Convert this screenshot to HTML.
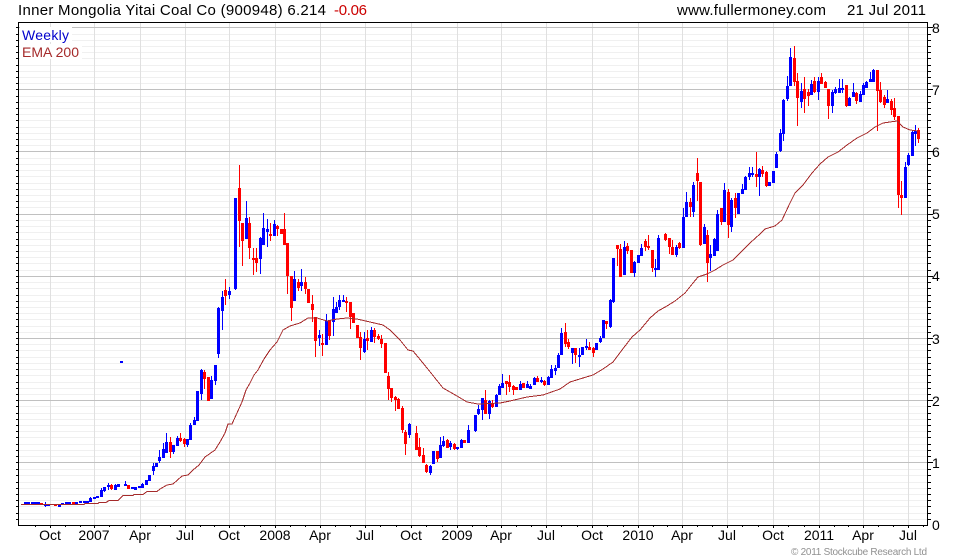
<!DOCTYPE html>
<html><head><meta charset="utf-8"><title>Inner Mongolia Yitai Coal Co</title>
<style>html,body{margin:0;padding:0;background:#fff;width:980px;height:560px;overflow:hidden}svg{display:block}text{font-family:"Liberation Sans",Arial,sans-serif}</style></head>
<body>
<svg width="980" height="560" viewBox="0 0 980 560" xmlns="http://www.w3.org/2000/svg">
<g shape-rendering="crispEdges" fill="none">
<path stroke="#f0f0f0" d="M19 519.5H927M19 513.5H927M19 506.5H927M19 500.5H927M19 494.5H927M19 488.5H927M19 482.5H927M19 475.5H927M19 469.5H927M19 456.5H927M19 450.5H927M19 444.5H927M19 437.5H927M19 431.5H927M19 425.5H927M19 419.5H927M19 413.5H927M19 406.5H927M19 394.5H927M19 388.5H927M19 382.5H927M19 375.5H927M19 369.5H927M19 363.5H927M19 357.5H927M19 350.5H927M19 344.5H927M19 332.5H927M19 326.5H927M19 319.5H927M19 313.5H927M19 307.5H927M19 301.5H927M19 295.5H927M19 288.5H927M19 282.5H927M19 270.5H927M19 263.5H927M19 257.5H927M19 251.5H927M19 245.5H927M19 239.5H927M19 232.5H927M19 226.5H927M19 220.5H927M19 207.5H927M19 201.5H927M19 195.5H927M19 189.5H927M19 183.5H927M19 176.5H927M19 170.5H927M19 164.5H927M19 158.5H927M19 145.5H927M19 139.5H927M19 133.5H927M19 127.5H927M19 120.5H927M19 114.5H927M19 108.5H927M19 102.5H927M19 96.5H927M19 83.5H927M19 77.5H927M19 71.5H927M19 65.5H927M19 58.5H927M19 52.5H927M19 46.5H927M19 40.5H927M19 34.5H927"/>
<path stroke="#e0e0e0" d="M50.5 23V525M94.5 23V525M140.5 23V525M185.5 23V525M229.5 23V525M275.5 23V525M320.5 23V525M365.5 23V525M411.5 23V525M457.5 23V525M501.5 23V525M546.5 23V525M592.5 23V525M638.5 23V525M682.5 23V525M727.5 23V525M773.5 23V525M819.5 23V525M863.5 23V525M908.5 23V525"/>
<path stroke="#c0c0c0" d="M19 27.5H927M19 89.5H927M19 151.5H927M19 214.5H927M19 276.5H927M19 338.5H927M19 400.5H927M19 462.5H927"/>
<rect x="20" y="27" width="52" height="15" fill="#fff"/>
<rect x="20" y="44" width="62" height="15" fill="#fff"/>
<path stroke="#000" d="M18.5 22V526M18 22.5H928M927.5 22V526M18 525.5H928"/>
<path stroke="#000" d="M16 519.5H18M16 513.5H18M16 506.5H18M16 500.5H18M16 494.5H18M16 488.5H18M16 482.5H18M16 475.5H18M16 469.5H18M16 462.5H18M16 456.5H18M16 450.5H18M16 444.5H18M16 437.5H18M16 431.5H18M16 425.5H18M16 419.5H18M16 413.5H18M16 406.5H18M16 400.5H18M16 394.5H18M16 388.5H18M16 382.5H18M16 375.5H18M16 369.5H18M16 363.5H18M16 357.5H18M16 350.5H18M16 344.5H18M16 338.5H18M16 332.5H18M16 326.5H18M16 319.5H18M16 313.5H18M16 307.5H18M16 301.5H18M16 295.5H18M16 288.5H18M16 282.5H18M16 276.5H18M16 270.5H18M16 263.5H18M16 257.5H18M16 251.5H18M16 245.5H18M16 239.5H18M16 232.5H18M16 226.5H18M16 220.5H18M16 214.5H18M16 207.5H18M16 201.5H18M16 195.5H18M16 189.5H18M16 183.5H18M16 176.5H18M16 170.5H18M16 164.5H18M16 158.5H18M16 151.5H18M16 145.5H18M16 139.5H18M16 133.5H18M16 127.5H18M16 120.5H18M16 114.5H18M16 108.5H18M16 102.5H18M16 96.5H18M16 89.5H18M16 83.5H18M16 77.5H18M16 71.5H18M16 65.5H18M16 58.5H18M16 52.5H18M16 46.5H18M16 40.5H18M16 34.5H18M16 27.5H18"/>
<path stroke="#000" d="M928 519.5H931M928 513.5H931M928 506.5H931M928 500.5H931M928 494.5H931M928 488.5H931M928 482.5H931M928 475.5H931M928 469.5H931M928 462.5H933M928 456.5H931M928 450.5H931M928 444.5H931M928 437.5H931M928 431.5H931M928 425.5H931M928 419.5H931M928 413.5H931M928 406.5H931M928 400.5H933M928 394.5H931M928 388.5H931M928 382.5H931M928 375.5H931M928 369.5H931M928 363.5H931M928 357.5H931M928 350.5H931M928 344.5H931M928 338.5H933M928 332.5H931M928 326.5H931M928 319.5H931M928 313.5H931M928 307.5H931M928 301.5H931M928 295.5H931M928 288.5H931M928 282.5H931M928 276.5H933M928 270.5H931M928 263.5H931M928 257.5H931M928 251.5H931M928 245.5H931M928 239.5H931M928 232.5H931M928 226.5H931M928 220.5H931M928 214.5H933M928 207.5H931M928 201.5H931M928 195.5H931M928 189.5H931M928 183.5H931M928 176.5H931M928 170.5H931M928 164.5H931M928 158.5H931M928 151.5H933M928 145.5H931M928 139.5H931M928 133.5H931M928 127.5H931M928 120.5H931M928 114.5H931M928 108.5H931M928 102.5H931M928 96.5H931M928 89.5H933M928 83.5H931M928 77.5H931M928 71.5H931M928 65.5H931M928 58.5H931M928 52.5H931M928 46.5H931M928 40.5H931M928 34.5H931M928 27.5H933"/>
<path stroke="#000" d="M50.5 526V528M94.5 526V528M140.5 526V528M185.5 526V528M229.5 526V528M275.5 526V528M320.5 526V528M365.5 526V528M411.5 526V528M457.5 526V528M501.5 526V528M546.5 526V528M592.5 526V528M638.5 526V528M682.5 526V528M727.5 526V528M773.5 526V528M819.5 526V528M863.5 526V528M908.5 526V528M35.5 526V527M65.5 526V527M80.5 526V527M109.5 526V527M125.5 526V527M155.5 526V527M170.5 526V527M200.5 526V527M214.5 526V527M244.5 526V527M260.5 526V527M290.5 526V527M305.5 526V527M335.5 526V527M350.5 526V527M380.5 526V527M396.5 526V527M426.5 526V527M442.5 526V527M472.5 526V527M486.5 526V527M516.5 526V527M531.5 526V527M561.5 526V527M577.5 526V527M607.5 526V527M623.5 526V527M653.5 526V527M667.5 526V527M697.5 526V527M712.5 526V527M742.5 526V527M758.5 526V527M788.5 526V527M804.5 526V527M834.5 526V527M848.5 526V527M878.5 526V527M893.5 526V527M923.5 526V527"/>

<!-- blue wicks -->
<path stroke="#0000ff" stroke-width="1" d="M45.5 502V507M90.5 497V502M101.5 488V497M104.5 487V492M108.5 483V490M115.5 484V490M125.5 481V486M142.5 483V488M153.5 463V475M159.5 450V463M163.5 443V458M166.5 433V453M173.5 445V454M177.5 436V446M187.5 439V447M190.5 423V440M194.5 417V425M201.5 369V400M211.5 376V399M215.5 365V385M218.5 307V358M222.5 291V330M229.5 287V299M235.5 198V290M246.5 201V239M260.5 237V274M263.5 213V245M267.5 219V247M274.5 220V236M294.5 271V301M301.5 269V291M319.5 330V346M326.5 314V345M333.5 297V336M336.5 302V313M339.5 295V310M343.5 295V302M364.5 332V353M371.5 327V342M409.5 423V438M430.5 465V475M440.5 437V458M443.5 436V447M450.5 441V450M457.5 447V450M461.5 439V448M468.5 425V443M475.5 415V432M478.5 405V415M482.5 398V420M489.5 400V419M496.5 394V407M499.5 384V395M502.5 374V388M520.5 381V390M527.5 381V388M530.5 384V389M534.5 377V385M541.5 377V383M548.5 376V385M551.5 365V378M555.5 365V375M558.5 353V368M561.5 328V355M572.5 348V364M579.5 348V367M586.5 339V350M600.5 336V343M603.5 320V338M610.5 299V328M613.5 258V303M624.5 241V275M634.5 261V277M641.5 244V256M655.5 259V277M658.5 235V270M676.5 245V257M683.5 208V248M686.5 192V217M693.5 182V217M704.5 224V244M710.5 245V271M714.5 238V256M717.5 210V251M724.5 183V222M731.5 198V232M738.5 193V214M742.5 184V194M745.5 176V190M749.5 167V180M752.5 167V177M759.5 168V196M776.5 152V168M780.5 129V152M783.5 99V141M787.5 76V101M790.5 48V86M801.5 83V108M811.5 80V95M818.5 77V100M832.5 90V113M835.5 87V94M839.5 79V93M842.5 79V93M849.5 97V106M853.5 83V97M860.5 91V102M863.5 83V95M866.5 81V88M870.5 72V82M873.5 69V82M887.5 90V103M905.5 162V198M908.5 153V166M912.5 131V156M915.5 125V146"/>
<!-- blue bodies -->
<path stroke="#0000ff" stroke-width="3" d="M25.5 502V504M28.5 502V504M32.5 502V504M35.5 502V504M38.5 502V504M45.5 504V506M48.5 504V506M59.5 505V507M62.5 503V505M66.5 502V504M69.5 502V504M76.5 502V504M80.5 501V503M84.5 501V503M87.5 501V503M90.5 498V502M94.5 497V499M97.5 496V498M101.5 490V497M104.5 487V491M108.5 485V487M115.5 485V490M118.5 484V487M121.5 361V363M125.5 484V486M132.5 487V489M135.5 487V490M139.5 486V488M142.5 484V488M146.5 480V485M149.5 475V481M153.5 466V471M156.5 463V467M159.5 457V461M163.5 449V458M166.5 442V453M173.5 445V452M177.5 438V446M187.5 439V445M190.5 425V440M194.5 420V425M197.5 391V421M201.5 370V394M211.5 380V399M215.5 365V381M218.5 308V354M222.5 297V311M229.5 291V295M235.5 198V289M246.5 218V239M260.5 238V259M263.5 228V245M267.5 229V232M274.5 224V236M294.5 279V301M301.5 282V286M319.5 335V338M326.5 321V345M333.5 309V322M336.5 307V313M339.5 300V307M343.5 300V302M364.5 339V352M371.5 330V342M409.5 424V435M430.5 466V473M433.5 451V464M440.5 445V458M443.5 441V446M450.5 443V447M457.5 447V449M461.5 440V448M468.5 430V443M475.5 415V431M478.5 409V414M482.5 398V410M489.5 401V414M496.5 395V407M499.5 386V395M502.5 383V388M520.5 384V390M527.5 384V388M530.5 386V389M534.5 378V385M541.5 380V382M548.5 377V385M551.5 369V378M555.5 368V371M558.5 355V368M561.5 333V355M572.5 348V353M579.5 355V357M582.5 347V355M586.5 346V348M596.5 343V350M600.5 338V342M603.5 320V338M610.5 300V327M613.5 258V302M624.5 247V275M634.5 262V273M638.5 255V263M641.5 248V256M655.5 268V270M658.5 238V270M676.5 247V255M683.5 217V248M686.5 202V217M693.5 185V212M704.5 227V244M710.5 254V258M714.5 239V256M717.5 214V251M724.5 190V222M731.5 200V227M738.5 193V214M742.5 189V194M745.5 177V190M749.5 173V177M752.5 173V175M759.5 169V177M769.5 182V186M773.5 171V183M776.5 154V168M780.5 133V151M783.5 100V134M787.5 86V99M790.5 57V86M801.5 91V102M811.5 84V95M818.5 81V92M832.5 92V106M835.5 89V93M839.5 88V93M842.5 88V90M849.5 98V106M853.5 92V97M860.5 94V102M863.5 85V95M866.5 82V88M870.5 79V82M873.5 70V82M887.5 99V103M905.5 167V198M908.5 155V165M912.5 132V156M915.5 131V134"/>
<!-- red wicks -->
<path stroke="#ff0000" stroke-width="1" d="M111.5 484V490M170.5 437V458M180.5 433V442M184.5 438V447M204.5 370V389M225.5 279V305M239.5 165V247M242.5 223V266M249.5 217V259M253.5 248V275M256.5 248V272M270.5 223V241M277.5 225V236M284.5 213V245M287.5 243V294M291.5 276V321M298.5 279V291M305.5 277V294M312.5 295V322M315.5 317V357M322.5 334V356M329.5 321V340M346.5 297V312M350.5 302V329M360.5 332V360M367.5 330V350M374.5 328V343M378.5 334V340M381.5 335V348M388.5 372V400M391.5 388V402M395.5 396V411M398.5 398V409M402.5 406V433M405.5 430V455M416.5 426V450M419.5 438V457M423.5 448V463M426.5 464V473M437.5 451V462M447.5 439V448M454.5 443V450M485.5 390V414M492.5 400V408M506.5 381V395M509.5 375V392M513.5 385V395M537.5 376V382M544.5 380V386M565.5 323V347M568.5 339V349M575.5 348V363M589.5 342V350M593.5 347V357M606.5 321V329M617.5 245V266M620.5 244V277M627.5 243V254M645.5 239V251M648.5 235V250M652.5 250V272M665.5 233V241M669.5 238V254M672.5 240V255M679.5 242V249M690.5 198V217M697.5 158V201M700.5 182V246M707.5 230V282M721.5 208V225M728.5 189V238M735.5 193V218M756.5 152V187M762.5 166V177M766.5 171V187M794.5 46V86M797.5 73V126M804.5 77V113M808.5 89V106M814.5 77V93M821.5 73V84M825.5 81V88M828.5 89V119M846.5 85V107M856.5 92V104M877.5 70V131M880.5 82V103M884.5 95V108M891.5 99V115M894.5 98V120M898.5 116V208M901.5 181V215M918.5 128V143"/>
<!-- red bodies -->
<path stroke="#ff0000" stroke-width="3" d="M41.5 503V505M55.5 504V506M73.5 502V504M111.5 485V489M128.5 485V489M170.5 442V452M180.5 438V441M184.5 439V444M204.5 372V379M208.5 377V401M225.5 290V296M239.5 188V221M242.5 223V241M249.5 223V248M253.5 258V260M256.5 258V263M270.5 234V236M277.5 226V229M281.5 229V234M284.5 229V245M287.5 243V276M291.5 276V308M298.5 282V288M305.5 282V289M308.5 289V303M312.5 304V310M315.5 317V341M322.5 343V345M329.5 321V336M346.5 301V303M350.5 302V317M353.5 313V323M357.5 325V338M360.5 337V348M367.5 338V341M374.5 330V337M378.5 336V339M381.5 339V344M385.5 343V373M388.5 376V389M391.5 388V398M395.5 397V400M398.5 399V409M402.5 408V430M405.5 432V444M416.5 433V450M419.5 447V456M423.5 455V463M426.5 465V472M437.5 451V459M447.5 440V448M454.5 444V449M464.5 440V443M485.5 400V414M492.5 403V407M506.5 381V384M509.5 382V387M513.5 386V390M516.5 387V390M523.5 383V388M537.5 378V382M544.5 381V385M565.5 332V344M568.5 342V347M575.5 348V355M589.5 347V350M593.5 348V353M606.5 321V324M617.5 245V249M620.5 249V277M627.5 246V251M631.5 250V273M645.5 241V247M648.5 246V248M652.5 250V268M665.5 234V240M669.5 238V247M672.5 247V255M679.5 243V248M690.5 202V207M697.5 173V181M700.5 182V245M707.5 235V263M721.5 208V222M728.5 192V225M735.5 198V208M756.5 174V177M762.5 170V174M766.5 172V186M794.5 58V82M797.5 81V98M804.5 89V99M808.5 92V96M814.5 81V92M821.5 77V84M825.5 82V88M828.5 89V106M846.5 85V106M856.5 93V101M877.5 70V91M880.5 90V102M884.5 97V105M891.5 101V110M894.5 108V117M898.5 116V195M901.5 195V198M918.5 130V139"/>
</g>
<polyline fill="none" stroke="#a52a2a" stroke-width="1" shape-rendering="crispEdges" points="21,504.5 84,504.5 85,503.5 98,503.5 99,502.5 106,502.5 109,500.5 118,500.5 123,495.5 133,495.5 134,494.5 143,494.5 147,491.5 157,491.5 160,489 167,485 173,484 182,476 188,475 193,470 199,465 205,457 215,450 220,442 225,433 228,424 232,424 237,413 242,402 246,390 250,383 254,375 258,370 264,359 270,350 277,342 283,330 290,326 300,323 308,318 317,318 327,321 337,319 347,318 357,319 370,322 383,325 390,330 400,340 408,350 413,351 418,357 427,368 443,388 457,396 467,402 478,404 500,403 510,401 527,397 543,395 560,389 570,382 583,378 593,375 603,369 613,362 622,350 632,337 640,330 650,318 658,311 667,306 675,301 685,293 693,283 698,277 707,274 715,270 723,265 733,260 743,250 750,243 760,234 765,229 775,226 782,220 790,203 795,193 803,185 812,173 820,164 828,157 838,152 847,145 857,138 867,133 875,127 883,123 897,121 903,127 910,130 918,131"/>
<g font-size="15" fill="#000">
<text x="18" y="15" textLength="308">Inner Mongolia Yitai Coal Co (900948) 6.214</text>
<text x="334" y="15" textLength="33" fill="#cc0000">-0.06</text>
<text x="677" y="15" textLength="149">www.fullermoney.com</text>
<text x="847" y="15" textLength="79">21 Jul 2011</text>
</g>
<text x="22" y="40" font-size="14" fill="#0000cc" textLength="47">Weekly</text>
<text x="22" y="57" font-size="14" fill="#a52a2a" textLength="57">EMA 200</text>
<g font-size="14" fill="#000">
<text x="932" y="33">8</text><text x="932" y="95">7</text><text x="932" y="157">6</text><text x="932" y="219">5</text><text x="932" y="281">4</text><text x="932" y="344">3</text><text x="932" y="406">2</text><text x="932" y="468">1</text><text x="932" y="530">0</text>
</g>
<g font-size="14" fill="#000" text-anchor="middle">
<text x="50" y="540">Oct</text><text x="94" y="540">2007</text><text x="140" y="540">Apr</text><text x="185" y="540">Jul</text><text x="229" y="540">Oct</text><text x="275" y="540">2008</text><text x="320" y="540">Apr</text><text x="365" y="540">Jul</text><text x="411" y="540">Oct</text><text x="457" y="540">2009</text><text x="501" y="540">Apr</text><text x="546" y="540">Jul</text><text x="592" y="540">Oct</text><text x="638" y="540">2010</text><text x="682" y="540">Apr</text><text x="727" y="540">Jul</text><text x="773" y="540">Oct</text><text x="819" y="540">2011</text><text x="863" y="540">Apr</text><text x="908" y="540">Jul</text>
</g>
<text x="791" y="555" font-size="10" fill="#909090" textLength="136">© 2011 Stockcube Research Ltd</text>
</svg>
</body></html>
